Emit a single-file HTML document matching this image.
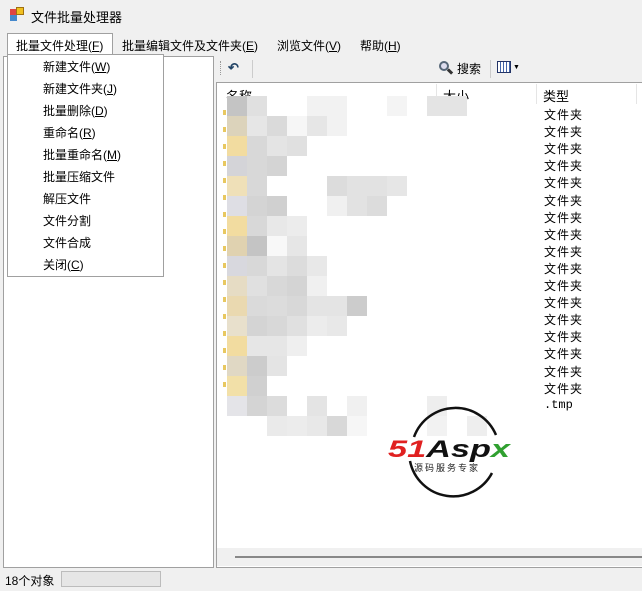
<!DOCTYPE html>
<html><head><meta charset="utf-8"><style>
*{margin:0;padding:0;box-sizing:border-box}
body{width:642px;height:591px;background:#f0f0f0;font-family:"Liberation Sans","Noto Sans CJK SC",sans-serif;font-size:12px;color:#000;position:relative;overflow:hidden}
.a{position:absolute}
.menu span{position:absolute;top:37px;font-size:12px}
.dd{left:7px;top:54px;width:157px;height:223px;background:#fff;border:1px solid #a0a0a0}
.dd div{position:absolute;left:35px;font-size:12px}
.ty{position:absolute;left:544px;font-size:12px;letter-spacing:1px}
.b{position:absolute;width:20px;height:20px}
</style></head><body>
<div class="a" style="left:10px;top:9px;width:7px;height:6px;background:#d44"></div>
<div class="a" style="left:16px;top:7px;width:8px;height:8px;background:#f0c020;border:1px solid #a07010"></div>
<div class="a" style="left:10px;top:15px;width:7px;height:6px;background:#48c"></div>
<div class="a" style="left:31px;top:7px;font-size:13px">文件批量处理器</div>
<div class="a" style="left:7px;top:33px;width:106px;height:22px;background:#fff;border:1px solid #a0a0a0;border-bottom:none"></div>
<div class="menu"><span style="left:16px">批量文件处理(<u>F</u>)</span><span style="left:122px">批量编辑文件及文件夹(<u>E</u>)</span><span style="left:277px">浏览文件(<u>V</u>)</span><span style="left:360px">帮助(<u>H</u>)</span></div>
<div class="a" style="left:3px;top:56px;width:211px;height:512px;background:#fff;border:1px solid #a0a0a0"></div>
<div class="a" style="left:220px;top:61px;width:1px;height:14px;border-left:1px dotted #999"></div>
<div class="a" style="left:228px;top:60px;font-size:13px;color:#246;font-weight:bold">↶</div>
<div class="a" style="left:252px;top:60px;width:1px;height:18px;background:#ccc"></div>
<div class="a" style="left:439px;top:61px;width:10px;height:10px;border:2px solid #567;border-radius:50%;background:#dde"></div>
<div class="a" style="left:447px;top:70px;width:6px;height:3px;background:#333;transform:rotate(45deg)"></div>
<div class="a" style="left:457px;top:60px;font-size:12px">搜索</div>
<div class="a" style="left:490px;top:60px;width:1px;height:18px;background:#ccc"></div>
<div class="a" style="left:497px;top:61px;width:14px;height:12px;border:1px solid #236;background:repeating-linear-gradient(90deg,#fff 0 2px,#46a 2px 3px)"></div>
<div class="a" style="left:513px;top:64px;font-size:7px">▼</div>
<div class="a" style="left:216px;top:82px;width:426px;height:486px;background:#fff;border:1px solid #a0a0a0;border-right:none"></div>
<div class="a" style="left:226px;top:86px;font-size:13px">名称</div>
<div class="a" style="left:443px;top:86px;font-size:13px">大小</div>
<div class="a" style="left:436px;top:84px;width:1px;height:20px;background:#e5e5e5"></div>
<div class="a" style="left:536px;top:84px;width:1px;height:20px;background:#e5e5e5"></div>
<div class="a" style="left:636px;top:84px;width:1px;height:20px;background:#e5e5e5"></div>
<div class="a" style="left:543px;top:86px;font-size:13px">类型</div>
<div id="rows"></div>
<div class="a" style="left:544px;top:398px;font-family:'Liberation Mono',monospace;font-size:12px">.tmp</div>
<div id="mo"></div>
<div class="a" style="left:217px;top:548px;width:425px;height:18px;background:#f0f0f0"></div>
<div class="a" style="left:235px;top:556px;width:407px;height:2px;background:#888"></div>
<svg class="a" style="left:380px;top:395px" width="140" height="110">
<path d="M34 42 A44 44 0 0 1 116 40" fill="none" stroke="#111" stroke-width="2.5"/>
<path d="M30 66 A44 44 0 0 0 112 78" fill="none" stroke="#111" stroke-width="2.5"/>
<text x="8" y="62" font-family="Liberation Sans" font-weight="bold" font-style="italic" font-size="24" textLength="122" lengthAdjust="spacingAndGlyphs"><tspan fill="#e02020">51</tspan><tspan fill="#111">Asp</tspan><tspan fill="#30a030">x</tspan></text>
<text x="34" y="76" font-family="Noto Sans CJK SC" font-size="9" fill="#222" letter-spacing="2">源码服务专家</text>
</svg>
<div class="a dd">
<div style="top:3px">新建文件(<u>W</u>)</div>
<div style="top:25px">新建文件夹(<u>J</u>)</div>
<div style="top:47px">批量删除(<u>D</u>)</div>
<div style="top:69px">重命名(<u>R</u>)</div>
<div style="top:91px">批量重命名(<u>M</u>)</div>
<div style="top:113px">批量压缩文件</div>
<div style="top:135px">解压文件</div>
<div style="top:157px">文件分割</div>
<div style="top:179px">文件合成</div>
<div style="top:201px">关闭(<u>C</u>)</div>
</div>
<div class="a" style="left:5px;top:572px;font-size:12px">18个对象</div>
<div class="a" style="left:61px;top:571px;width:100px;height:16px;background:#e6e6e6;border:1px solid #bcbcbc"></div>
<script>
var h='';for(var i=0;i<17;i++)h+='<div class="ty" style="top:'+(106+i*17.1)+'px">文件夹</div>';
document.getElementById('rows').innerHTML=h;
var m=[
[[0,'#c4c4c4'],[1,'#e0e0e0'],[4,'#f2f2f2'],[5,'#f2f2f2'],[8,'#f4f4f4'],[10,'#e4e4e4'],[11,'#e4e4e4']],
[[0,'#dcd3bb'],[1,'#e6e6e6'],[2,'#dadada'],[3,'#f6f6f6'],[4,'#e6e6e6'],[5,'#f2f2f2']],
[[0,'#f2dca0'],[1,'#d8d8d8'],[2,'#e4e4e4'],[3,'#e0e0e0']],
[[0,'#d4d4d8'],[1,'#d8d8d8'],[2,'#d4d4d4']],
[[0,'#efe0b8'],[1,'#d8d8d8'],[5,'#dcdcdc'],[6,'#e2e2e2'],[7,'#e2e2e2'],[8,'#e6e6e6']],
[[0,'#dedee4'],[1,'#d4d4d4'],[2,'#d0d0d0'],[5,'#f0f0f0'],[6,'#e2e2e2'],[7,'#dcdcdc']],
[[0,'#f2dca0'],[1,'#d8d8d8'],[2,'#e8e8e8'],[3,'#ececec']],
[[0,'#e0d2b0'],[1,'#c4c4c4'],[2,'#f8f8f8'],[3,'#e6e6e6']],
[[0,'#d8d8de'],[1,'#d8d8d8'],[2,'#e4e4e4'],[3,'#dcdcdc'],[4,'#e8e8e8']],
[[0,'#e6dcc4'],[1,'#e0e0e0'],[2,'#d8d8d8'],[3,'#d4d4d4'],[4,'#f0f0f0']],
[[0,'#ead9b0'],[1,'#dadada'],[2,'#dcdcdc'],[3,'#d8d8d8'],[4,'#e4e4e4'],[5,'#e4e4e4'],[6,'#cccccc']],
[[0,'#e8e0cc'],[1,'#d4d4d4'],[2,'#d8d8d8'],[3,'#e0e0e0'],[4,'#ececec'],[5,'#e8e8e8']],
[[0,'#f2dca0'],[1,'#e6e6e6'],[2,'#e6e6e6'],[3,'#efefef']],
[[0,'#e0d8c4'],[1,'#cccccc'],[2,'#e4e4e4']],
[[0,'#f2e0a8'],[1,'#d0d0d0']],
[[0,'#e4e4e8'],[1,'#d4d4d4'],[2,'#dcdcdc'],[4,'#e4e4e4'],[6,'#f0f0f0'],[10,'#eeeeee']],
[[2,'#eaeaea'],[3,'#ececec'],[4,'#e8e8e8'],[5,'#d8d8d8'],[6,'#f6f6f6'],[10,'#f2f2f2'],[12,'#eeeeee']]];
var s='';m.forEach(function(r,ri){r.forEach(function(c){s+='<div class="b" style="left:'+(227+c[0]*20)+'px;top:'+(96+ri*20)+'px;background:'+c[1]+'"></div>';});});
for(var i=0;i<17;i++)s+='<div class="b" style="left:223px;width:3px;height:5px;top:'+(110+i*17)+'px;background:#e8c860"></div>';
document.getElementById('mo').innerHTML=s;
</script>
</body></html>
